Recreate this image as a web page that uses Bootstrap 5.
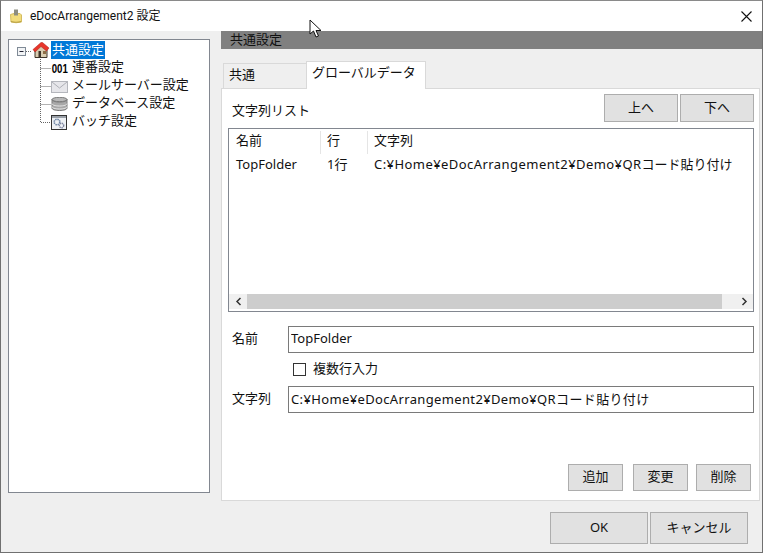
<!DOCTYPE html>
<html lang="ja">
<head>
<meta charset="utf-8">
<title>eDocArrangement2 設定</title>
<link href="https://cdn.jsdelivr.net/npm/bootstrap@5.3.0/dist/css/bootstrap.min.css" rel="stylesheet">
<style>
html,body{margin:0;height:553px;overflow:hidden;background:#efefef}
body,.btn,.form-control{font-family:"Noto Sans","Noto Sans CJK JP",sans-serif;font-size:13px;color:#111;line-height:18px}
.win{position:relative;width:763px;height:553px;border:1px solid #707070;border-top-color:#8a8a8a;background:#efefef}
.ttl{height:30px;background:#fff;padding-left:8px;font:12px/16px Roboto,"Noto Sans CJK JP",sans-serif}
.ttl svg.ti{margin-right:7px}
.xbtn{margin-left:auto;margin-right:10px}
.tree{width:202px;height:454px;margin:8px 0 0 7px;border:1px solid #828790;background:#fff;padding:1px 0 0 7px}
.trow{height:18px;white-space:nowrap}
.sel{background:#0078d7;color:#fff;padding:0 1px;height:18px;margin-left:1px;line-height:16px}
.lbl{margin-left:4px;padding-bottom:4px}
.numw{width:17px;flex:none}
.num{display:inline-block;font-family:"Liberation Sans",sans-serif;font-size:13px;font-weight:700;color:#000;transform:scaleX(.74);transform-origin:0 50%;padding-left:1px}
.rp{width:541px;margin-left:11px}
.hd{height:18px;background:#808080;color:#111;padding-left:9px;line-height:17px}
.tabsx{margin:12px 0 0 2px;height:27px;align-items:flex-end;flex-wrap:nowrap}
.tb1,.tb2{display:block;color:#111;border:1px solid #d9d9d9;background:#efefef;text-decoration:none}
.tb1:hover,.tb2:hover{color:#111}
.tb1{width:83px;height:25px;padding:1px 0 0 5px;border-bottom:0;border-right:0}
.tb2{width:120px;height:28px;padding:1px 0 0 5px;background:#fff;border-bottom:0;margin-bottom:-1px;position:relative;z-index:1}
.pane{height:413px;width:539px;background:#fff;border:1px solid #d9d9d9;padding:5px 5px 0 6px}
.btnx{background:#e1e1e1;border:1px solid #adadad;border-radius:0;padding:0 0 3px;color:#111;display:flex;align-items:center;justify-content:center}
.btnx:hover{background:#e1e1e1;border-color:#adadad;color:#111}
.sm1{width:74px;height:28px}
.lcap{margin-left:4px;padding-top:3px}
.lst{height:184px;width:526px;border:1px solid #828790;margin-top:6px}
.lst .tbl{flex:1 1 auto}
.th1{height:25px;padding:2px 0 0 7px}
.c1{width:85px;border-right:1px solid #e5e5e5}
.c2{width:47px;border-right:1px solid #e5e5e5;padding-left:6px}
.c3{padding-left:6px;white-space:nowrap}
.tb1r{padding:1px 0 0 7px}
.ls1{letter-spacing:.44px}
.ls2{letter-spacing:.36px}
.sb{height:15px;background:#f0f0f0;margin-bottom:2px}
.sbthumb{flex:1;height:15px;background:#cdcdcd}
.sbb{width:18px;height:15px}
.sbr{width:31px;padding-left:14px}
.fl{width:60px;padding:0 0 3px 4px;flex:none}
.form-control.inp{width:468px;height:27px;border:1px solid #7a7a7a;border-radius:0;padding:0 2px 3px;color:#111;box-shadow:none;background:#fff}
.f1{margin-top:14px}
.chk{height:33px;padding-left:65px}
.chkb{width:13px;height:13px;border:1px solid #333;background:#fff;margin:0 7px 0 0;flex:none}
.chkt{padding-bottom:3px}
.acts{margin-top:51px;width:523px}
.ab{width:55px;height:27px}
.foot{margin-top:11px;width:527px}
.fb{width:98px;height:32px}
.cur{position:absolute;left:308px;top:18px}
</style>
</head>
<body>
<div class="win d-flex flex-column">
  <div class="ttl d-flex align-items-center">
    <svg class="ti" width="14" height="15" viewBox="0 0 14 15"><path d="M1.500 5.500 L5 4.500 L11 4.500 L12.500 6 L12.500 13 Q7 14.500 2 13 Z" fill="#f2dc7c" stroke="#d4bc60"/><rect x="5" y="0.500" width="4" height="6" fill="#8d8d80"/><path d="M2 12 Q7 13.500 12 12 L12 13 Q7 14.500 2 13Z" fill="#b8a044"/></svg>
    <span>eDocArrangement2 設定</span>
    <svg class="xbtn" width="11" height="11" viewBox="0 0 11 11"><path d="M.5.5l10 10M10.500.5l-10 10" stroke="#111" stroke-width="1.100"/></svg>
  </div>
  <div class="d-flex flex-grow-1">
    <div class="tree">
      <div class="trow d-flex align-items-center">
        <svg width="16" height="18" viewBox="0 0 16 18"><rect x="1.500" y="6.500" width="8" height="8" fill="#f2f4f6" stroke="#7f8a96"/><path d="M3.500 10.500h4" stroke="#223"/><path d="M10 10.500h6" stroke="#666" stroke-dasharray="1 1"/></svg>
        <svg width="18" height="18" viewBox="0 0 18 18"><path d="M3 8v8.500h12V8L9 3z" fill="#d8ccb0" stroke="#3e3428"/><rect x="6.500" y="10" width="2.500" height="6.500" fill="#3e3428"/><rect x="11" y="10" width="3" height="3" fill="#8c6d46"/><path d="M1 8.500 L9 1.500 L10.500 1.500 L17 7 L14.500 10 L9 5.500 L3 11z" fill="#e8352a" stroke="#a81e16" stroke-width=".5"/></svg>
        <span class="sel">共通設定</span>
      </div>
      <div class="trow d-flex align-items-center"><svg width="35" height="18" viewBox="0 0 35 18"><path d="M24.500 0V18M24.500 9.500H35" stroke="#666" stroke-dasharray="1 1" fill="none"/></svg><span class="numw"><span class="num">001</span></span><span class="lbl">連番設定</span></div>
      <div class="trow d-flex align-items-center"><svg width="35" height="18" viewBox="0 0 35 18"><path d="M24.500 0V18M24.500 9.500H35" stroke="#666" stroke-dasharray="1 1" fill="none"/></svg><svg width="17" height="13" viewBox="0 0 17 13"><rect x=".5" y="1.500" width="16" height="11" fill="#e6e6ea" stroke="#b4b6bc"/><path d="M1 2l7.500 6 7.500-6" fill="none" stroke="#aeb0b6"/></svg><span class="lbl">メールサーバー設定</span></div>
      <div class="trow d-flex align-items-center"><svg width="35" height="18" viewBox="0 0 35 18"><path d="M24.500 0V18M24.500 9.500H35" stroke="#666" stroke-dasharray="1 1" fill="none"/></svg><svg width="17" height="14" viewBox="0 0 17 14"><ellipse cx="8.500" cy="2.500" rx="7.500" ry="2.200" fill="#b8b8b8" stroke="#7a7a7a"/><path d="M1 2.500v8.500c0 1.500 3 2.500 7.500 2.500s7.500-1 7.500-2.500V2.500c0 1.500-3 2.500-7.500 2.500S1 4 1 2.500z" fill="#a8a8a8" stroke="#7a7a7a"/><path d="M1 6.500c0 1.500 3 2.500 7.500 2.500s7.500-1 7.500-2.500M1 9.500c0 1.500 3 2.500 7.500 2.500s7.500-1 7.500-2.500" fill="none" stroke="#e6e6e6"/></svg><span class="lbl">データベース設定</span></div>
      <div class="trow d-flex align-items-center"><svg width="35" height="18" viewBox="0 0 35 18"><path d="M24.500 0V9.500H35" stroke="#666" stroke-dasharray="1 1" fill="none"/></svg><svg width="16" height="15" viewBox="0 0 16 15"><rect x=".5" y=".5" width="15" height="14" fill="#eef1f5" stroke="#333"/><rect x="1" y="1" width="14" height="2" fill="#9aa0a8"/><circle cx="6" cy="7" r="2.800" fill="none" stroke="#6f86a6" stroke-width="1.600" stroke-dasharray="1.500 .7"/><circle cx="10.500" cy="10.500" r="2.200" fill="none" stroke="#7f86a0" stroke-width="1.400" stroke-dasharray="1.300 .6"/></svg><span class="lbl" style="margin-left:5px">バッチ設定</span></div>
    </div>
    <div class="rp">
      <div class="hd">共通設定</div>
      <div class="nav tabsx d-flex">
        <a class="tb1" href="#">共通</a>
        <a class="tb2" href="#">グローバルデータ</a>
      </div>
      <div class="pane">
        <div class="d-flex align-items-center">
          <span class="lcap">文字列リスト</span>
          <button class="btn btnx sm1 ms-auto" type="button">上へ</button>
          <button class="btn btnx sm1" type="button" style="margin-left:2px">下へ</button>
        </div>
        <div class="lst d-flex flex-column">
          <div class="tbl">
            <div class="d-flex th1"><div class="c1">名前</div><div class="c2">行</div><div class="c3">文字列</div></div>
            <div class="d-flex tb1r"><div class="c1 border-0">TopFolder</div><div class="c2 border-0">1行</div><div class="c3"><span class="ls1">C:¥Home¥eDocArrangement2¥Demo¥QR</span>コード貼り付け</div></div>
          </div>
          <div class="sb d-flex">
            <div class="sbb d-flex align-items-center justify-content-center"><svg width="7" height="9" viewBox="0 0 7 9"><path d="M5.500 1L2 4.500 5.500 8" fill="none" stroke="#333" stroke-width="1.500"/></svg></div>
            <div class="sbthumb"></div>
            <div class="sbb sbr d-flex align-items-center justify-content-center"><svg width="7" height="9" viewBox="0 0 7 9"><path d="M1.500 1L5 4.500 1.500 8" fill="none" stroke="#333" stroke-width="1.500"/></svg></div>
          </div>
        </div>
        <div class="d-flex align-items-center f1"><label class="fl">名前</label><input class="form-control inp" value="TopFolder"></div>
        <div class="d-flex align-items-center chk"><span class="chkb"></span><span class="chkt">複数行入力</span></div>
        <div class="d-flex align-items-center"><label class="fl">文字列</label><input class="form-control inp ls2" value="C:¥Home¥eDocArrangement2¥Demo¥QRコード貼り付け"></div>
        <div class="d-flex justify-content-end acts">
          <button class="btn btnx ab" type="button">追加</button>
          <button class="btn btnx ab" type="button" style="margin-left:10px">変更</button>
          <button class="btn btnx ab" type="button" style="margin-left:8px">削除</button>
        </div>
      </div>
      <div class="d-flex justify-content-end foot">
        <button class="btn btnx fb" type="button">OK</button>
        <button class="btn btnx fb" type="button" style="margin-left:2px">キャンセル</button>
      </div>
    </div>
  </div>
  <svg class="cur" width="14" height="20" viewBox="0 0 14 20"><path d="M1 1V15L4.500 12 7 18 9.500 17 7 11.500H12z" fill="#fff" stroke="#111" stroke-width="1"/></svg>
</div>
<script src="https://cdn.jsdelivr.net/npm/bootstrap@5.3.0/dist/js/bootstrap.bundle.min.js"></script>
</body>
</html>
